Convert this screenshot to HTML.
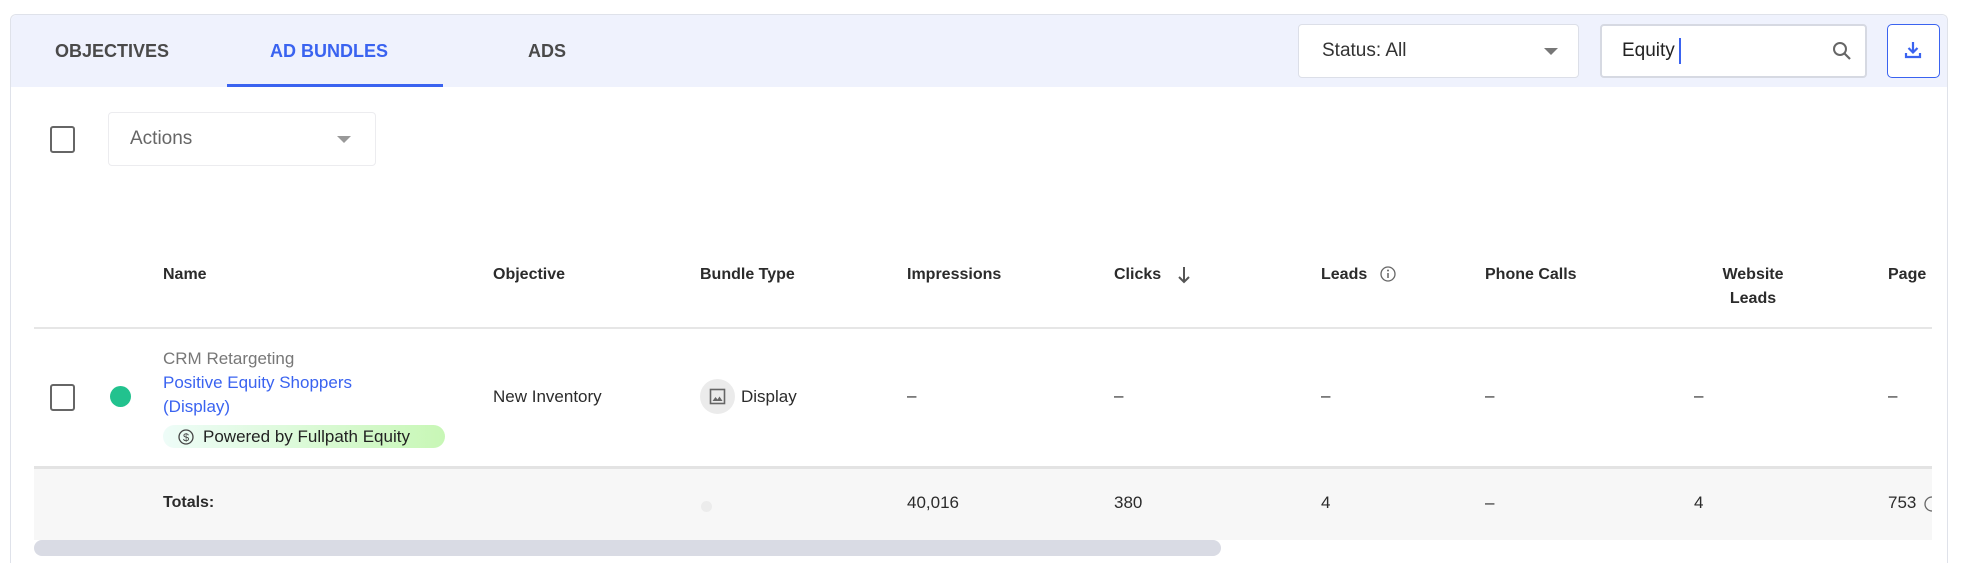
<!DOCTYPE html>
<html><head><meta charset="utf-8"><style>
*{box-sizing:border-box;margin:0;padding:0}
html{width:1967px;height:563px;overflow:hidden}
body{width:1967px;height:563px;background:#fff;font-family:"Liberation Sans",sans-serif;position:relative;overflow:hidden;color:#2b2b2b}
.a{position:absolute;white-space:nowrap}
.card{position:absolute;left:10px;top:14px;width:1938px;height:549px;border:1px solid #dfe2ea;border-bottom:none;border-radius:6px 6px 0 0;background:#fff}
.hdr{position:absolute;left:11px;top:15px;width:1936px;height:72px;background:#eff2fd;border-radius:6px 6px 0 0}
.tab{font-weight:bold;font-size:18px;color:#4a4a4a;top:41px}
.box{position:absolute;background:#fff;border:1px solid #e3e5ea;border-radius:4px}
.caret{position:absolute;width:0;height:0;border-left:7px solid transparent;border-right:7px solid transparent;border-top:7px solid #777}
.th{font-weight:bold;font-size:16px;color:#2b2b2b;top:266px}
.td{font-size:17px;color:#2b2b2b}
.cb{position:absolute;width:25px;height:27px;border:2.5px solid #666;border-radius:3px}
</style></head><body>
<div class="card"></div>
<div class="hdr"></div>
<div class="a tab" style="left:55px">OBJECTIVES</div>
<div class="a tab" style="left:270px;color:#3a63f0">AD BUNDLES</div>
<div class="a tab" style="left:528px">ADS</div>
<div class="a" style="left:227px;top:84px;width:216px;height:3px;background:#3a63f0"></div>

<div class="box" style="left:1298px;top:24px;width:281px;height:54px;border-color:#dcdfe8"></div>
<div class="a" style="left:1322px;top:40px;font-size:19px;color:#333">Status: All</div>
<div class="caret" style="left:1544px;top:48px"></div>
<div class="box" style="left:1600px;top:24px;width:267px;height:54px;border:2px solid #d6d9e2"></div>
<div class="a" style="left:1622px;top:40px;font-size:19px;color:#222">Equity</div>
<div class="a" style="left:1679px;top:38px;width:2px;height:26px;background:#3a63f0"></div>
<svg class="a" style="left:1831px;top:40px" width="22" height="22" viewBox="0 0 22 22"><circle cx="9" cy="9" r="6" fill="none" stroke="#666" stroke-width="2"/><path d="M13.5 13.5L19 19" stroke="#666" stroke-width="2.2"/></svg>
<div class="box" style="left:1887px;top:24px;width:53px;height:54px;border:1.5px solid #3a63f0;border-radius:5px"></div>
<svg class="a" style="left:1902px;top:39px" width="22" height="22" viewBox="0 0 22 22"><path d="M11 3v10M6.5 9l4.5 4.5 4.5-4.5" fill="none" stroke="#3a63f0" stroke-width="2.2"/><path d="M4 14v4h14v-4" fill="none" stroke="#3a63f0" stroke-width="2.2"/></svg>

<div class="cb" style="left:50px;top:126px"></div>
<div class="box" style="left:108px;top:112px;width:268px;height:54px;border-color:#ececef"></div>
<div class="a" style="left:130px;top:128px;font-size:19px;color:#666">Actions</div>
<div class="caret" style="left:337px;top:136px;border-top-color:#999"></div>

<div class="a th" style="left:163px">Name</div>
<div class="a th" style="left:493px">Objective</div>
<div class="a th" style="left:700px">Bundle Type</div>
<div class="a th" style="left:907px">Impressions</div>
<div class="a th" style="left:1114px">Clicks</div>
<svg class="a" style="left:1176px;top:265px" width="16" height="20" viewBox="0 0 16 20"><path d="M8 2v15M3 12l5 5 5-5" fill="none" stroke="#555" stroke-width="2"/></svg>
<div class="a th" style="left:1321px">Leads</div>
<svg class="a" style="left:1379px;top:265px" width="18" height="18" viewBox="0 0 18 18"><circle cx="9" cy="9" r="7" fill="none" stroke="#666" stroke-width="1.3"/><path d="M9 8v5" stroke="#666" stroke-width="1.5"/><circle cx="9" cy="5.5" r="1" fill="#666"/></svg>
<div class="a th" style="left:1485px">Phone Calls</div>
<div class="a th" style="left:1717px;text-align:center;width:72px;line-height:24px;top:263px">Website<br>Leads</div>
<div class="a th" style="left:1888px">Page</div>
<div class="a" style="left:34px;top:327px;width:1898px;height:2px;background:#e6e6e6"></div>

<div class="cb" style="left:50px;top:384px"></div>
<div class="a" style="left:110px;top:386px;width:21px;height:21px;border-radius:50%;background:#22c28e"></div>
<div class="a td" style="left:163px;top:349px;color:#777">CRM Retargeting</div>
<div class="a td" style="left:163px;top:373px;color:#3a63f0">Positive Equity Shoppers</div>
<div class="a td" style="left:163px;top:397px;color:#3a63f0">(Display)</div>
<div class="a" style="left:163px;top:425px;width:282px;height:23px;border-radius:12px;background:linear-gradient(90deg,#eefcf8,#c8f7b6)"></div>
<svg class="a" style="left:177px;top:428px" width="18" height="18" viewBox="0 0 18 18"><circle cx="9" cy="9" r="7" fill="none" stroke="#444" stroke-width="1.3"/><text x="9" y="13" font-size="11" text-anchor="middle" fill="#444" font-family="Liberation Sans">$</text></svg>
<div class="a" style="left:203px;top:427px;font-size:17px;color:#222">Powered by Fullpath Equity</div>
<div class="a td" style="left:493px;top:387px">New Inventory</div>
<div class="a" style="left:700px;top:379px;width:35px;height:35px;border-radius:50%;background:#ebebeb"></div>
<svg class="a" style="left:708px;top:387px" width="19" height="19" viewBox="0 0 19 19"><rect x="2.5" y="2.5" width="14" height="14" fill="none" stroke="#666" stroke-width="1.6"/><path d="M4.5 14l3-4 2 2.5 2-3 3 4.5z" fill="#666"/></svg>
<div class="a td" style="left:741px;top:387px">Display</div>
<div class="a td" style="left:907px;top:386px">–</div>
<div class="a td" style="left:1114px;top:386px">–</div>
<div class="a td" style="left:1321px;top:386px">–</div>
<div class="a td" style="left:1485px;top:386px">–</div>
<div class="a td" style="left:1694px;top:386px">–</div>
<div class="a td" style="left:1888px;top:386px">–</div>

<div class="a" style="left:34px;top:466px;width:1898px;height:74px;background:#f7f7f7;border-top:3px solid #e3e3e3"></div>
<div class="a th" style="left:163px;top:494px">Totals:</div>
<div class="a" style="left:701px;top:501px;width:11px;height:11px;border-radius:50%;background:#ececec"></div>
<div class="a td" style="left:907px;top:493px">40,016</div>
<div class="a td" style="left:1114px;top:493px">380</div>
<div class="a td" style="left:1321px;top:493px">4</div>
<div class="a td" style="left:1485px;top:493px">–</div>
<div class="a td" style="left:1694px;top:493px">4</div>
<div class="a td" style="left:1888px;top:493px">753</div>
<svg class="a" style="left:1922px;top:494px" width="10" height="20" viewBox="0 0 10 20"><circle cx="10" cy="10" r="7" fill="none" stroke="#666" stroke-width="1.3"/></svg>
<div class="a" style="left:34px;top:540px;width:1187px;height:16px;border-radius:8px;background:#d9dbe4"></div>
</body></html>
